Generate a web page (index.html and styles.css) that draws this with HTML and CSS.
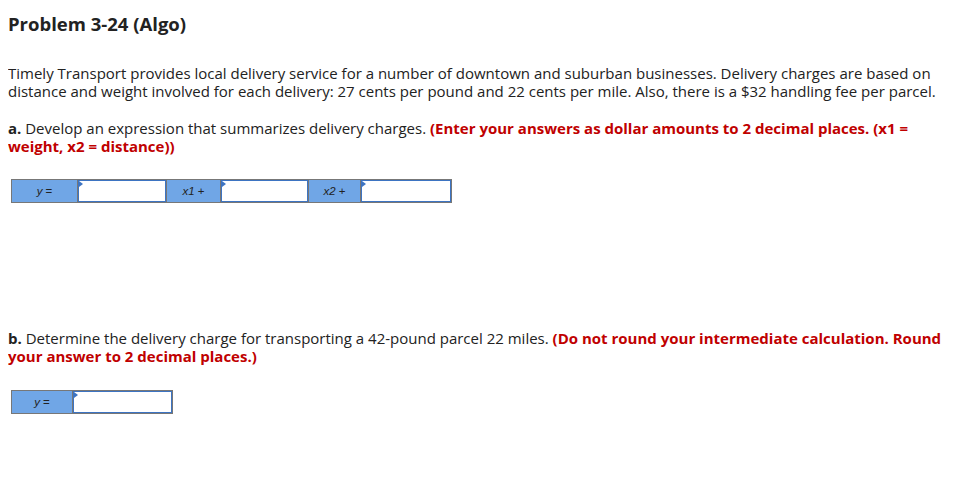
FILE: index.html
```html
<!DOCTYPE html>
<html>
<head>
<meta charset="utf-8">
<link rel="stylesheet" href="styles.css">
</head>
<body>
<h1 class="title">Problem 3-24 (Algo)</h1>
<p class="intro">Timely Transport provides local delivery service for a number of downtown and suburban businesses. Delivery charges are based on distance and weight involved for each delivery: 27 cents per pound and 22 cents per mile. Also, there is a $32 handling fee per parcel.</p>
<p class="part"><b>a.</b> Develop an expression that summarizes delivery charges. <span class="note">(Enter your answers as dollar amounts to 2 decimal places. (x1 = weight, x2 = distance))</span></p>
<div class="eq eq-a">
  <div class="lbl l1"><i>y</i> =</div>
  <div class="inp i1"></div>
  <div class="lbl l2"><i>x1</i> +</div>
  <div class="inp i2"></div>
  <div class="lbl l3"><i>x2</i> +</div>
  <div class="inp i3"></div>
</div>
<p class="part part-b"><b>b.</b> Determine the delivery charge for transporting a 42-pound parcel 22 miles. <span class="note">(Do not round your intermediate calculation. Round your answer to 2 decimal places.)</span></p>
<div class="eq eq-b">
  <div class="lbl lb1"><i>y</i> =</div>
  <div class="inp ib1"></div>
</div>
</body>
</html>
```
FILE: styles.css
```css
body {
  margin: 8px;
  font-family: "Open Sans", Lato, sans-serif;
  color: #222;
  background: #fff;
}
.title {
  font-size: 18.5px;
  font-weight: 700;
  margin: 6px 0 0 0;
  line-height: 20px;
}
.intro {
  font-size: 15px;
  line-height: 18px;
  margin: 30px 0 0 0;
}
.part {
  font-size: 15px;
  line-height: 18px;
  margin: 19px 0 0 0;
}
.part b { font-weight: 700; }
.note { color: #c00000; font-weight: 700; }
.part-b { margin-top: 126px; }
.eq {
  display: flex;
  border: 1px solid #777;
  background: #777;
  gap: 1px;
  height: 22px;
  margin: 24px 0 0 3px;
  width: max-content;
  font-family: "Liberation Sans", Arial, sans-serif;
  font-size: 11.5px;
}
.eq-b { margin-top: 25px; }
.lbl {
  background: #70a6e6;
  display: flex;
  align-items: center;
  justify-content: center;
  color: #222;
}
.lbl i { margin-right: 3px; }
.inp {
  background: #fff;
  border: 1px solid #3d74c2;
  box-sizing: border-box;
  position: relative;
}
.inp::before {
  content: "";
  position: absolute;
  left: 0;
  top: 0;
  border-left: 4px solid #3d74c2;
  border-top: 3px solid transparent;
  border-bottom: 3px solid transparent;
}
.l1 { width: 65px; }
.i1 { width: 88px; }
.l2 { width: 53px; }
.i2 { width: 87px; }
.l3 { width: 51px; }
.i3 { width: 90px; }
.lb1 { width: 60px; }
.ib1 { width: 99px; }
```
